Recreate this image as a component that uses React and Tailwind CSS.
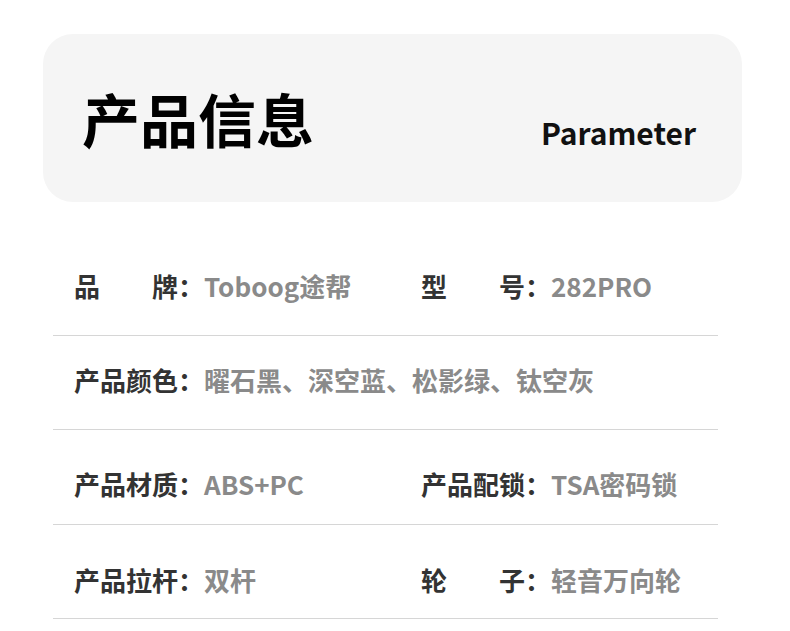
const rows = [
  {
    pad: 'pt-[69px] pb-[34px]',
    cells: [
      { label: ['品', '牌'], value: 'Toboog途帮' },
      { label: ['型', '号'], value: '282PRO' },
    ],
  },
  {
    pad: 'pt-[29px] pb-[34px]',
    cells: [{ label: '产品颜色', value: '曜石黑、深空蓝、松影绿、钛空灰' }],
  },
  {
    pad: 'pt-[39px] pb-[25px]',
    cells: [
      { label: '产品材质', value: 'ABS+PC' },
      { label: '产品配锁', value: 'TSA密码锁' },
    ],
  },
  {
    pad: 'pt-[40px] pb-[23px]',
    cells: [
      { label: '产品拉杆', value: '双杆' },
      { label: ['轮', '子'], value: '轻音万向轮' },
    ],
  },
];

function Cell({ label, value }) {
  return (
    <div className="flex whitespace-nowrap">
      <span className="font-bold text-[#333333]">
        {Array.isArray(label) ? (
          <span className="inline-flex w-[4em] justify-between">
            <span>{label[0]}</span>
            <span>{label[1]}</span>
          </span>
        ) : (
          label
        )}
        ：
      </span>
      <span className="font-semibold text-[#8a8a8a]">{value}</span>
    </div>
  );
}

export default function App() {
  return (
    <div className="min-h-screen bg-white pt-[34px] font-['Noto_Sans_CJK_SC',sans-serif]">
      {/* 标题卡片 */}
      <div className="ml-[43px] flex h-[168px] w-[699px] items-center justify-between rounded-[30px] bg-[#f5f5f5] pl-[39px] pr-[46px]">
        <h1 className="text-[58px] font-bold leading-none text-black">产品信息</h1>
        <span className="mt-[28px] text-[30px] font-bold leading-none text-[#111111]">Parameter</span>
      </div>

      {/* 参数列表 */}
      <div className="ml-[53px] w-[665px]">
        {rows.map((row, i) => (
          <div
            key={i}
            className={`grid grid-cols-[347px_1fr] border-b border-[#d6d6d6] pl-[21px] text-[26px] leading-[30px] ${row.pad}`}
          >
            {row.cells.map((c, j) => (
              <Cell key={j} label={c.label} value={c.value} />
            ))}
          </div>
        ))}
      </div>
    </div>
  );
}
